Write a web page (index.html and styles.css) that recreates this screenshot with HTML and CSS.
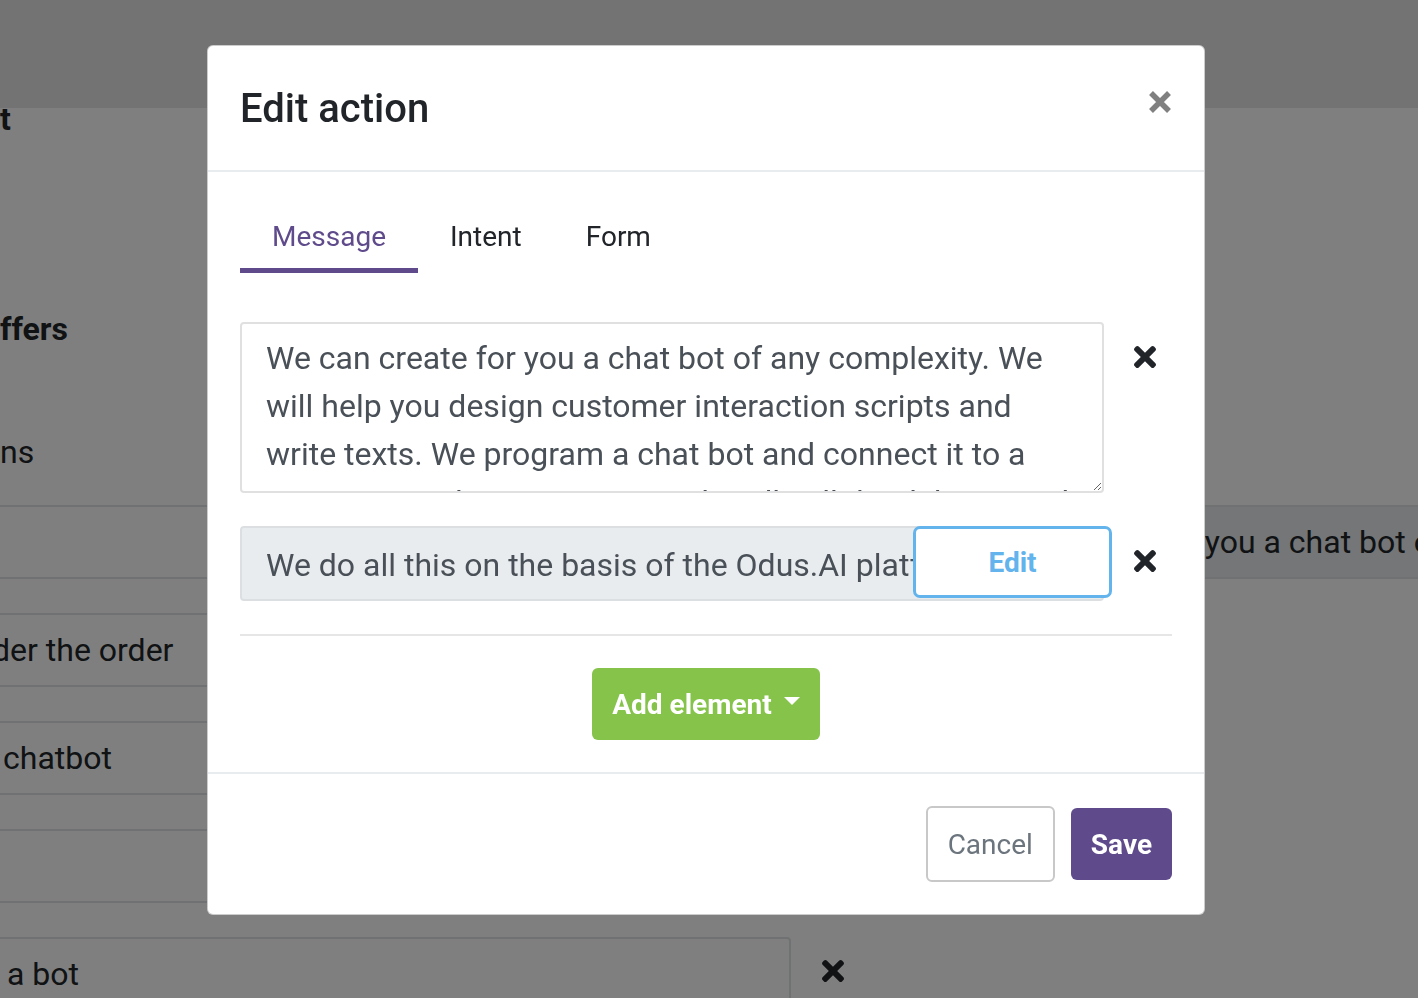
FILE: index.html
```html
<!DOCTYPE html>
<html lang="en">
<head>
<meta charset="utf-8">
<title>Edit action</title>
<link rel="stylesheet" href="styles.css">
</head>
<body>
<div class="page">
  <div class="topbar"></div>
  <div class="content">
    <div class="col-left">
      <div class="bg-title first">t</div>
      <div class="bg-title second">ffers</div>
      <div class="bg-sub">ns</div>
      <div class="bg-rows">
        <div class="bg-row">
          <div class="bg-field"></div>
          <svg class="bg-remove" viewBox="0 80 352 352"><path d="M242.72 256l100.07-100.07c12.28-12.28 12.28-32.19 0-44.48l-22.24-22.24c-12.28-12.28-32.19-12.28-44.48 0L176 189.28 75.93 89.21c-12.28-12.28-32.19-12.28-44.48 0L9.21 111.45c-12.28 12.28-12.28 32.19 0 44.48L109.28 256 9.21 356.07c-12.28 12.28-12.28 32.19 0 44.48l22.24 22.24c12.28 12.28 32.2 12.28 44.48 0L176 322.72l100.07 100.07c12.28 12.28 32.2 12.28 44.48 0l22.24-22.24c12.28-12.28 12.28-32.19 0-44.48L242.72 256z"/></svg>
        </div>
        <div class="bg-row">
          <div class="bg-field"><span class="shiftback">der the order</span></div>
          <svg class="bg-remove" viewBox="0 80 352 352"><path d="M242.72 256l100.07-100.07c12.28-12.28 12.28-32.19 0-44.48l-22.24-22.24c-12.28-12.28-32.19-12.28-44.48 0L176 189.28 75.93 89.21c-12.28-12.28-32.19-12.28-44.48 0L9.21 111.45c-12.28 12.28-12.28 32.19 0 44.48L109.28 256 9.21 356.07c-12.28 12.28-12.28 32.19 0 44.48l22.24 22.24c12.28 12.28 32.2 12.28 44.48 0L176 322.72l100.07 100.07c12.28 12.28 32.2 12.28 44.48 0l22.24-22.24c12.28-12.28 12.28-32.19 0-44.48L242.72 256z"/></svg>
        </div>
        <div class="bg-row">
          <div class="bg-field"><span class="shift3">chatbot</span></div>
          <svg class="bg-remove" viewBox="0 80 352 352"><path d="M242.72 256l100.07-100.07c12.28-12.28 12.28-32.19 0-44.48l-22.24-22.24c-12.28-12.28-32.19-12.28-44.48 0L176 189.28 75.93 89.21c-12.28-12.28-32.19-12.28-44.48 0L9.21 111.45c-12.28 12.28-12.28 32.19 0 44.48L109.28 256 9.21 356.07c-12.28 12.28-12.28 32.19 0 44.48l22.24 22.24c12.28 12.28 32.2 12.28 44.48 0L176 322.72l100.07 100.07c12.28 12.28 32.2 12.28 44.48 0l22.24-22.24c12.28-12.28 12.28-32.19 0-44.48L242.72 256z"/></svg>
        </div>
        <div class="bg-row">
          <div class="bg-field"></div>
          <svg class="bg-remove" viewBox="0 80 352 352"><path d="M242.72 256l100.07-100.07c12.28-12.28 12.28-32.19 0-44.48l-22.24-22.24c-12.28-12.28-32.19-12.28-44.48 0L176 189.28 75.93 89.21c-12.28-12.28-32.19-12.28-44.48 0L9.21 111.45c-12.28 12.28-12.28 32.19 0 44.48L109.28 256 9.21 356.07c-12.28 12.28-12.28 32.19 0 44.48l22.24 22.24c12.28 12.28 32.2 12.28 44.48 0L176 322.72l100.07 100.07c12.28 12.28 32.2 12.28 44.48 0l22.24-22.24c12.28-12.28 12.28-32.19 0-44.48L242.72 256z"/></svg>
        </div>
        <div class="bg-row">
          <div class="bg-field"><span class="shift7">a bot</span></div>
          <svg class="bg-remove" viewBox="0 80 352 352"><path d="M242.72 256l100.07-100.07c12.28-12.28 12.28-32.19 0-44.48l-22.24-22.24c-12.28-12.28-32.19-12.28-44.48 0L176 189.28 75.93 89.21c-12.28-12.28-32.19-12.28-44.48 0L9.21 111.45c-12.28 12.28-12.28 32.19 0 44.48L109.28 256 9.21 356.07c-12.28 12.28-12.28 32.19 0 44.48l22.24 22.24c12.28 12.28 32.2 12.28 44.48 0L176 322.72l100.07 100.07c12.28 12.28 32.2 12.28 44.48 0l22.24-22.24c12.28-12.28 12.28-32.19 0-44.48L242.72 256z"/></svg>
        </div>
      </div>
    </div>
    <div class="col-right">
      <div class="bg-preview"><span class="bg-preview-text">We can create for you a chat bot of any complexity.</span></div>
    </div>
  </div>
</div>

<div class="backdrop">
  <div class="modal">
    <div class="modal-header">
      <h5 class="modal-title">Edit action</h5>
      <svg class="close" viewBox="0 0 24 24"><path d="M3 3L21 21M21 3L3 21"/></svg>
    </div>
    <div class="modal-body">
      <div class="tabs">
        <div class="tab active">Message</div>
        <div class="tab">Intent</div>
        <div class="tab">Form</div>
      </div>
      <div class="fields">
        <div class="field-row">
          <textarea class="field-text">We can create for you a chat bot of any complexity. We will help you design customer interaction scripts and write texts. We program a chat bot and connect it to a CRM, 1C, mailing services. We handle all the delivery and launch details.</textarea>
          <svg class="remove" viewBox="0 80 352 352"><path d="M242.72 256l100.07-100.07c12.28-12.28 12.28-32.19 0-44.48l-22.24-22.24c-12.28-12.28-32.19-12.28-44.48 0L176 189.28 75.93 89.21c-12.28-12.28-32.19-12.28-44.48 0L9.21 111.45c-12.28 12.28-12.28 32.19 0 44.48L109.28 256 9.21 356.07c-12.28 12.28-12.28 32.19 0 44.48l22.24 22.24c12.28 12.28 32.2 12.28 44.48 0L176 322.72l100.07 100.07c12.28 12.28 32.2 12.28 44.48 0l22.24-22.24c12.28-12.28 12.28-32.19 0-44.48L242.72 256z"/></svg>
        </div>
        <div class="field-row">
          <div class="field-wrap">
            <div class="field-static"><span class="field-static-text">We do all this on the basis of the Odus.AI platform.</span></div>
            <button class="btn-edit">Edit</button>
          </div>
          <svg class="remove" viewBox="0 80 352 352"><path d="M242.72 256l100.07-100.07c12.28-12.28 12.28-32.19 0-44.48l-22.24-22.24c-12.28-12.28-32.19-12.28-44.48 0L176 189.28 75.93 89.21c-12.28-12.28-32.19-12.28-44.48 0L9.21 111.45c-12.28 12.28-12.28 32.19 0 44.48L109.28 256 9.21 356.07c-12.28 12.28-12.28 32.19 0 44.48l22.24 22.24c12.28 12.28 32.2 12.28 44.48 0L176 322.72l100.07 100.07c12.28 12.28 32.2 12.28 44.48 0l22.24-22.24c12.28-12.28 12.28-32.19 0-44.48L242.72 256z"/></svg>
        </div>
      </div>
      <hr class="divider">
      <div class="add-wrap">
        <button class="btn-add">Add element<span class="caret"></span></button>
      </div>
    </div>
    <div class="modal-footer">
      <button class="btn-cancel">Cancel</button>
      <button class="btn-save">Save</button>
    </div>
  </div>
</div>
</body>
</html>
```

FILE: styles.css
```css
* { box-sizing: border-box; }

html, body {
  margin: 0;
  height: 100%;
  overflow: hidden;
}

body {
  font-family: Roboto, "Liberation Sans", sans-serif;
  color: #212529;
  background: #fff;
}

/* ---------- background page ---------- */
.page { width: 1418px; }

.topbar {
  height: 108px;
  background: #e6e6e6;
}

.content { display: flex; }

.col-left {
  width: 870px;
  flex: none;
}

.bg-title {
  font-size: 32px;
  font-weight: 700;
  line-height: 32px;
  white-space: nowrap;
}
.bg-title.first { margin-top: -5px; }
.bg-title.second { margin-top: 178px; }

.bg-sub {
  font-size: 32px;
  line-height: 32px;
  margin-top: 91px;
}

.bg-rows {
  margin-top: 37px;
  display: flex;
  flex-direction: column;
  gap: 34px;
}

.bg-row {
  display: flex;
  align-items: flex-start;
}

.bg-field {
  margin-left: -20px;
  width: 811px;
  height: 74px;
  border: 2px solid #dee2e6;
  border-radius: 4px;
  padding: 0 22px 0 18px;
  font-size: 32px;
  line-height: 70px;
  white-space: nowrap;
  overflow: hidden;
}

.shiftback { margin-left: -8px; }
.shift3 { margin-left: 3px; }
.shift7 { margin-left: 7px; }

.bg-remove {
  flex: none;
  width: 22px;
  height: 22px;
  margin-left: 31px;
  margin-top: 23px;
  fill: #212529;
}

.col-right {
  flex: none;
  padding-top: 397px;
}

.bg-preview {
  margin-left: 51px;
  width: 497px;
  height: 74px;
  background: #e9ecef;
  border-top: 2px solid #dee2e6;
  border-bottom: 2px solid #dee2e6;
  padding: 0 0 0 26px;
  font-size: 32px;
  line-height: 70px;
  white-space: nowrap;
  overflow: hidden;
}

.bg-preview-text {
  display: block;
  overflow: hidden;
}

/* ---------- modal ---------- */
.backdrop {
  position: fixed;
  inset: 0;
  background: rgba(0, 0, 0, 0.5);
  display: flex;
  align-items: flex-start;
  padding: 45px 0 0 207px;
}

.modal {
  width: 998px;
  background: #fff;
  border: 1px solid rgba(0, 0, 0, 0.2);
  border-radius: 6px;
}

.modal-header {
  display: flex;
  justify-content: space-between;
  align-items: flex-start;
  padding: 33px 32px 31px;
  border-bottom: 2px solid #e9ecef;
}

.modal-title {
  margin: 0;
  font-size: 40px;
  font-weight: 500;
  line-height: 60px;
  color: #212529;
}

.close {
  flex: none;
  width: 24px;
  height: 24px;
  margin-top: 11px;
  fill: none;
  stroke: #808080;
  stroke-width: 5.5;
}

.modal-body { padding: 32px; }

.tabs { display: flex; }

.tab {
  padding: 12px 32px 10px;
  font-size: 28px;
  line-height: 42px;
  border-bottom: 5px solid transparent;
  color: #212529;
}

.tab.active {
  color: #5f4b8b;
  border-bottom-color: #5f4b8b;
}

.fields { margin-top: 49px; }

.field-row {
  display: flex;
  align-items: flex-start;
}

.field-row + .field-row { margin-top: 33px; }

.field-text {
  display: block;
  flex: none;
  width: 864px;
  height: 171px;
  margin: 0;
  border: 2px solid #e0e0e0;
  border-radius: 4px;
  padding: 10px 24px 12px;
  font-family: Roboto, "Liberation Sans", sans-serif;
  font-size: 32px;
  line-height: 48px;
  color: #495057;
  background: #fff;
  resize: both;
  overflow: hidden;
}

.remove {
  flex: none;
  width: 22px;
  height: 22px;
  margin-left: 30px;
  margin-top: 24px;
  fill: #212529;
}

.field-wrap {
  position: relative;
  flex: none;
  width: 864px;
}

.field-static {
  height: 75px;
  border: 2px solid #dcdfe2;
  border-radius: 4px;
  background: #e9ecef;
  padding: 13px 24px 0;
  font-size: 32px;
  line-height: 48px;
  color: #495057;
  white-space: nowrap;
  overflow: hidden;
}

.field-static-text {
  display: block;
  width: 647px;
  overflow: hidden;
}

.btn-edit {
  position: absolute;
  left: 673px;
  top: 0;
  width: 199px;
  height: 72px;
  border: 3px solid #63b3ed;
  border-radius: 7px;
  background: #fff;
  color: #63b3ed;
  font-family: Roboto, "Liberation Sans", sans-serif;
  font-size: 28px;
  font-weight: 700;
  padding: 0;
}

.divider {
  margin: 33px 0 0;
  border: 0;
  border-top: 2px solid #e6e6e6;
}

.add-wrap {
  display: flex;
  justify-content: center;
  margin-top: 32px;
}

.btn-add {
  display: inline-flex;
  align-items: center;
  height: 72px;
  padding: 0 20px;
  border: 0;
  border-radius: 6px;
  background: #86c34a;
  color: #fff;
  font-family: Roboto, "Liberation Sans", sans-serif;
  font-size: 28px;
  font-weight: 700;
}

.caret {
  width: 0;
  height: 0;
  margin-left: 12px;
  margin-top: -6px;
  border-top: 8px solid #fff;
  border-left: 8px solid transparent;
  border-right: 8px solid transparent;
}

.modal-footer {
  display: flex;
  justify-content: flex-end;
  align-items: center;
  gap: 16px;
  padding: 32px;
  border-top: 2px solid #e9ecef;
}

.btn-cancel {
  height: 76px;
  padding: 0 20px;
  border: 2px solid #c8c8c8;
  border-radius: 6px;
  background: #fff;
  color: #6c757d;
  font-family: Roboto, "Liberation Sans", sans-serif;
  font-size: 28px;
  font-weight: 400;
}

.btn-save {
  height: 72px;
  padding: 0 20px;
  border: 0;
  border-radius: 6px;
  background: #5f4b8b;
  color: #fff;
  font-family: Roboto, "Liberation Sans", sans-serif;
  font-size: 28px;
  font-weight: 700;
}
```
